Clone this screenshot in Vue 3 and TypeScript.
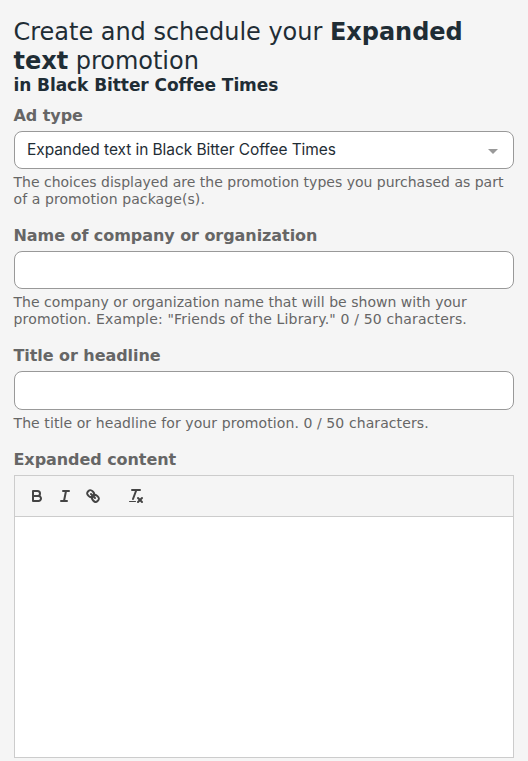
<script setup lang="ts">
import { ref } from 'vue'

const company = ref('')
const headline = ref('')
const limit = 50
</script>

<template>
  <main class="page">
    <h1 class="title">
      <span class="line">Create and schedule your <b>Expanded</b></span>
      <span class="line"><b>text</b> promotion</span>
    </h1>
    <h2 class="subtitle">in Black Bitter Coffee Times</h2>

    <section class="field first">
      <label class="label">Ad type</label>
      <div class="control select">
        <span class="value">Expanded text in Black Bitter Coffee Times</span>
        <svg class="arrow" width="10" height="5" viewBox="0 0 10 5"><path d="M0 0H10L5 5Z" fill="#999" /></svg>
      </div>
      <p class="help">
        <span class="line">The choices displayed are the promotion types you purchased as part</span>
        <span class="line loose">of a promotion package(s).</span>
      </p>
    </section>

    <section class="field second">
      <label class="label" for="company">Name of company or organization</label>
      <input id="company" v-model="company" class="control" :maxlength="limit" />
      <p class="help">
        <span class="line slight">The company or organization name that will be shown with your</span>
        <span class="line looser">promotion. Example: "Friends of the Library." {{ company.length }} / {{ limit }} characters.</span>
      </p>
    </section>

    <section class="field third">
      <label class="label" for="headline">Title or headline</label>
      <input id="headline" v-model="headline" class="control tall" :maxlength="limit" />
      <p class="help">
        <span class="line loose">The title or headline for your promotion. {{ headline.length }} / {{ limit }} characters.</span>
      </p>
    </section>

    <section class="field">
      <label class="label">Expanded content</label>
      <div class="editor">
        <div class="toolbar">
          <div class="group">
            <button type="button" aria-label="Bold">
              <svg viewBox="0 0 18 18">
                <path d="M5,4H9.5A2.5,2.5,0,0,1,12,6.5v0A2.5,2.5,0,0,1,9.5,9H5A0,0,0,0,1,5,9V4A0,0,0,0,1,5,4Z" />
                <path d="M5,9h5.5A2.5,2.5,0,0,1,13,11.5v0A2.5,2.5,0,0,1,10.5,14H5a0,0,0,0,1,0,0V9A0,0,0,0,1,5,9Z" />
              </svg>
            </button>
            <button type="button" aria-label="Italic">
              <svg viewBox="0 0 18 18">
                <line x1="7" x2="13" y1="4" y2="4" />
                <line x1="5" x2="11" y1="14" y2="14" />
                <line x1="8" x2="10" y1="14" y2="4" />
              </svg>
            </button>
            <button type="button" aria-label="Link">
              <svg viewBox="0 0 18 18">
                <line x1="7" x2="11" y1="7" y2="11" />
                <path d="M8.9,4.577a3.476,3.476,0,0,1,.36,4.679A3.476,3.476,0,0,1,4.577,8.9C3.185,7.5,2.035,6.4,4.217,4.217S7.5,3.185,8.9,4.577Z" />
                <path d="M13.423,9.1a3.476,3.476,0,0,0-4.679-.36,3.476,3.476,0,0,0,.36,4.679c1.392,1.392,2.5,2.542,4.679.36S14.815,10.5,13.423,9.1Z" />
              </svg>
            </button>
          </div>
          <div class="group">
            <button type="button" aria-label="Clear formatting">
              <svg viewBox="0 0 18 18">
                <line x1="5" x2="13" y1="3" y2="3" />
                <line x1="6" x2="9.35" y1="12" y2="3" />
                <line x1="11" x2="15" y1="11" y2="15" />
                <line x1="15" x2="11" y1="11" y2="15" />
                <rect class="fill" x="2" y="14" width="7" height="1" rx="0.5" />
              </svg>
            </button>
          </div>
        </div>
        <div class="content" contenteditable="true"></div>
      </div>
    </section>
  </main>
</template>

<style>
body {
  margin: 0;
  background: #f5f5f5;
}
</style>

<style scoped>
.page {
  box-sizing: border-box;
  height: 761px;
  padding: 18px 14px 0;
  overflow: hidden;
  background: #f5f5f5;
  color: #1f2d35;
  font-family: Verdana, "DejaVu Sans", sans-serif;
}
.line {
  display: block;
  white-space: nowrap;
}
.title,
.subtitle,
.label,
.help {
  text-indent: -0.5px;
}
.title {
  margin: 0 0 -1px;
  font-size: 24px;
  font-weight: 400;
  line-height: 29px;
  letter-spacing: -0.02px;
}
.subtitle {
  margin: 0;
  font-size: 17px;
  font-weight: 700;
  line-height: 20px;
  letter-spacing: -0.08px;
}
.field {
  display: flex;
  flex-direction: column;
}
.first {
  box-sizing: border-box;
  height: 131px;
  padding-top: 11px;
}
.second {
  height: 120px;
}
.third {
  height: 104px;
}
.label {
  flex: none;
  height: 25px;
  color: #666;
  font-size: 16px;
  font-weight: 700;
  line-height: 20px;
  letter-spacing: -0.06px;
}
.control {
  box-sizing: border-box;
  flex: none;
  width: 100%;
  height: 38px;
  margin: 0;
  padding: 0 15px 0 12px;
  border: 1px solid #999;
  border-radius: 8px;
  background: #fff;
  outline: none;
}
.tall {
  height: 39px;
}
.select {
  display: flex;
  align-items: center;
  justify-content: space-between;
}
.value {
  font-family: Inter, sans-serif;
  font-size: 15.5px;
  line-height: 20px;
  letter-spacing: -0.07px;
  white-space: nowrap;
}
.arrow {
  margin-top: 3px;
}
.help {
  margin: 5px 0 0;
  color: #666;
  font-size: 14px;
  line-height: 17px;
}
.slight {
  letter-spacing: 0.03px;
}
.loose {
  letter-spacing: 0.09px;
}
.looser {
  letter-spacing: 0.16px;
}
.editor {
  box-sizing: border-box;
  height: 283px;
  border: 1px solid #ccc;
}
.toolbar {
  display: flex;
  gap: 15px;
  padding: 8px;
  border-bottom: 1px solid #ccc;
}
.group {
  display: flex;
}
button {
  width: 28px;
  height: 24px;
  padding: 3px 5px;
  border: 0;
  background: none;
}
button svg {
  display: block;
  width: 18px;
  height: 18px;
  fill: none;
  stroke: #444;
  stroke-width: 2;
  stroke-linecap: round;
  stroke-linejoin: round;
}
button svg .fill {
  fill: #444;
  stroke: none;
}
.content {
  height: 240px;
  background: #fff;
  outline: none;
}
</style>
